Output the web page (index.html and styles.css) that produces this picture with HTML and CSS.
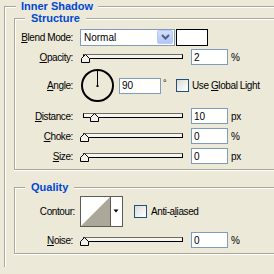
FILE: index.html
```html
<!DOCTYPE html>
<html>
	<head>
		<title>Inner Shadow</title>
		<link rel="stylesheet" href="styles.css">
	</head>

	<body>
		<fieldset class="group outer">
			<legend>Inner Shadow</legend>

			<fieldset class="group box">
				<legend>Structure</legend>

				<div class="row first">
					<label class="lbl"><u>B</u>lend Mode:</label>
					<div class="select">
						<span>Normal</span>
						<span class="drop"><svg width="9" height="6" viewBox="0 0 9 6"><path d="M1 1 L4.5 4.5 L8 1" fill="none" stroke="#4d6185" stroke-width="2"/></svg></span>
					</div>
					<span class="swatch"></span>
				</div>

				<div class="row">
					<label class="lbl"><u>O</u>pacity:</label>
					<div class="slider">
						<span class="track"></span>
						<svg class="thumb" style="left: 1px;" width="9" height="9"><polygon points="4.5,0.5 8.5,4.5 8.5,8.5 0.5,8.5 0.5,4.5" fill="#f2f1ea" stroke="#000"/></svg>
					</div>
					<input class="num" value="2"><span class="unit">%</span>
				</div>

				<div class="row angle">
					<label class="lbl"><u>A</u>ngle:</label>
					<svg class="dial" width="35" height="35">
						<circle cx="17.5" cy="17.5" r="15.5" fill="none" stroke="#000" stroke-width="2"/>
						<line x1="17.5" y1="3" x2="17.5" y2="17" stroke="#000" stroke-width="1"/>
						<rect x="16.5" y="17" width="2" height="2" fill="#000"/>
					</svg>
					<input class="num wide" value="90"><span class="deg">°</span>
					<span class="check"></span><span>Use <u>G</u>lobal Light</span>
				</div>

				<div class="row gap">
					<label class="lbl"><u>D</u>istance:</label>
					<div class="slider">
						<span class="track"></span>
						<svg class="thumb" style="left: 10px;" width="9" height="9"><polygon points="4.5,0.5 8.5,4.5 8.5,8.5 0.5,8.5 0.5,4.5" fill="#f2f1ea" stroke="#000"/></svg>
					</div>
					<input class="num" value="10"><span class="unit">px</span>
				</div>

				<div class="row">
					<label class="lbl"><u>C</u>hoke:</label>
					<div class="slider">
						<span class="track"></span>
						<svg class="thumb" style="left: 0px;" width="9" height="9"><polygon points="4.5,0.5 8.5,4.5 8.5,8.5 0.5,8.5 0.5,4.5" fill="#f2f1ea" stroke="#000"/></svg>
					</div>
					<input class="num" value="0"><span class="unit">%</span>
				</div>

				<div class="row">
					<label class="lbl"><u>S</u>ize:</label>
					<div class="slider">
						<span class="track"></span>
						<svg class="thumb" style="left: 0px;" width="9" height="9"><polygon points="4.5,0.5 8.5,4.5 8.5,8.5 0.5,8.5 0.5,4.5" fill="#f2f1ea" stroke="#000"/></svg>
					</div>
					<input class="num" value="0"><span class="unit">px</span>
				</div>
			</fieldset>

			<fieldset class="group box quality">
				<legend>Quality</legend>

				<div class="row contour">
					<label class="lbl wide">Contour:</label>
					<svg class="curve" width="43" height="31">
						<rect x="0.5" y="0.5" width="42" height="30" fill="#fff" stroke="#5e5d55"/>
						<polygon points="1,30 30,1 30,30" fill="#aca899"/>
						<line x1="30.5" y1="1" x2="30.5" y2="30" stroke="#5e5d55"/>
						<polygon points="33.5,13.5 38.5,13.5 36,16.5" fill="#000"/>
					</svg>
					<span class="check spaced"></span><span>Anti-a<u>l</u>iased</span>
				</div>

				<div class="row noise">
					<label class="lbl"><u>N</u>oise:</label>
					<div class="slider">
						<span class="track"></span>
						<svg class="thumb" style="left: 0px;" width="9" height="9"><polygon points="4.5,0.5 8.5,4.5 8.5,8.5 0.5,8.5 0.5,4.5" fill="#f2f1ea" stroke="#000"/></svg>
					</div>
					<input class="num" value="0"><span class="unit">%</span>
				</div>
			</fieldset>
		</fieldset>
	</body>
</html>
```

FILE: styles.css
```css
html, body {
	margin: 0px;
	padding: 0px;
	overflow: hidden;
	background: #ECE9D8;
	color: #000;
	font-family: "Liberation Sans", Arial, sans-serif;
	font-size: 10px;
}

/* the dialog goes on past the right and bottom edge, so no right/bottom border there */
.group {
	box-sizing: border-box;
	margin: 0px;
	padding: 0px;
	min-width: 0px;
	border: 1px solid #ACA899;
	border-right: 0px;
	box-shadow: inset 1px 1px 0px #fff, 0px 1px 0px #fff;
}

.group legend {
	margin-left: 10px;
	padding: 0px 6px;
	line-height: 12px;
	font-size: 11px;
	font-weight: bold;
	color: #0046D5;
	background: #ECE9D8;
}

.outer {
	margin-left: 4px;
	width: 270px;
	padding-bottom: 13px;
	border-bottom: 0px;
	box-shadow: inset 1px 1px 0px #fff;
}

.outer > legend {
	margin-left: 11px;
	padding: 0px 5px;
}

.box {
	margin-left: 9px;
	width: 260px;
	padding: 3px 0px 3px 0px;
}

.quality {
	margin-top: 11px;
	padding-top: 2px;
}

.row {
	display: flex;
	align-items: center;
	height: 20px;
	white-space: nowrap;
}

.row.angle {
	height: 37px;
}

.row.gap {
	margin-top: 2px;
}

.row.contour {
	height: 33px;
}

.row.noise {
	margin-top: 2px;
}

.lbl {
	flex: none;
	width: 58px;
	margin-right: 7px;
	text-align: right;
	letter-spacing: -0.4px;
}

.lbl.wide {
	width: 60px;
	margin-right: 5px;
}

.row > span {
	letter-spacing: -0.4px;
}

.select {
	box-sizing: border-box;
	display: flex;
	align-items: center;
	width: 95px;
	height: 17px;
	padding-left: 3px;
	border: 1px solid #7F9DB9;
	background: #fff;
}

.drop {
	display: flex;
	align-items: center;
	justify-content: center;
	box-sizing: border-box;
	width: 16px;
	height: 14px;
	margin-left: auto;
	margin-right: 1px;
	border-radius: 2px;
	border: 1px solid #B8CBF6;
	background: linear-gradient(#D2DEFB, #B2C6F5);
}

.swatch {
	box-sizing: border-box;
	width: 32px;
	height: 17px;
	margin-left: 1px;
	border: 1px solid #000;
	background: #fff;
}

.slider {
	position: relative;
	flex: none;
	width: 104px;
	height: 9px;
	margin-top: 3px;
}

.track {
	display: block;
	box-sizing: border-box;
	margin-left: 3px;
	width: 100px;
	height: 5px;
	border: 1px solid #000;
	border-top-color: #6F6D62;
	background: #F6F5F0;
}

.thumb {
	position: absolute;
	top: 0px;
	display: block;
}

.num {
	appearance: none;
	box-sizing: border-box;
	width: 37px;
	height: 16px;
	margin: 0px 0px 0px 7px;
	padding: 0px 2px;
	border: 1px solid #7F9DB9;
	border-radius: 0px;
	background: #fff;
	font-family: "Liberation Sans", Arial, sans-serif;
	font-size: 10px;
	color: #000;
	outline: none;
}

.num.wide {
	width: 42px;
	margin-left: 4px;
}

.unit {
	margin-left: 3px;
}

.dial {
	display: block;
	flex: none;
}

.deg {
	align-self: flex-start;
	width: 13px;
	margin-top: 11px;
	margin-left: 2px;
	line-height: 10px;
	font-size: 9px;
}

.check {
	box-sizing: border-box;
	flex: none;
	width: 13px;
	height: 13px;
	margin-right: 3px;
	border: 1px solid #1C5180;
	background: linear-gradient(135deg, #DCDCD5, #fff);
}

.check.spaced {
	margin-left: 11px;
	margin-right: 4px;
}

.curve {
	display: block;
	flex: none;
}
```
